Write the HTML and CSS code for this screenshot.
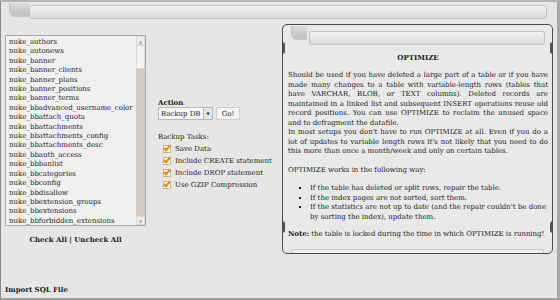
FILE: index.html
```html
<!DOCTYPE html>
<html>
  <head>
    <title>Database Administration</title>
    <link rel="stylesheet" href="styles.css">
  </head>
  <body>
    <div class="frame">
      <div class="topbar">
        <span class="tab-fold"></span>
        <div class="bar"></div>
      </div>

      <div class="main">
        <div class="left-col">
          <div class="listbox">
            <div class="options">
              <div>nuke_authors</div>
              <div>nuke_autonews</div>
              <div>nuke_banner</div>
              <div>nuke_banner_clients</div>
              <div>nuke_banner_plans</div>
              <div>nuke_banner_positions</div>
              <div>nuke_banner_terms</div>
              <div>nuke_bbadvanced_username_color</div>
              <div>nuke_bbattach_quota</div>
              <div>nuke_bbattachments</div>
              <div>nuke_bbattachments_config</div>
              <div>nuke_bbattachments_desc</div>
              <div>nuke_bbauth_access</div>
              <div>nuke_bbbanlist</div>
              <div>nuke_bbcategories</div>
              <div>nuke_bbconfig</div>
              <div>nuke_bbdisallow</div>
              <div>nuke_bbextension_groups</div>
              <div>nuke_bbextensions</div>
              <div>nuke_bbforbidden_extensions</div>
            </div>
            <div class="scrollbar">
              <span class="sb-btn">&#9650;</span>
              <span class="sb-thumb"></span>
              <span class="sb-track"></span>
              <span class="sb-btn">&#9660;</span>
            </div>
          </div>
          <div class="check-links"><b>Check All</b> | <b>Uncheck All</b></div>
        </div>

        <div class="mid-col">
          <div class="label-bold">Action</div>
          <div class="action-row">
            <span class="select">Backup DB<span class="select-arrow">&#9660;</span></span>
            <span class="go-button">Go!</span>
          </div>
          <div class="tasks-title">Backup Tasks:</div>
          <div class="task"><span class="checkbox"></span>Save Data</div>
          <div class="task"><span class="checkbox"></span>Include CREATE statement</div>
          <div class="task"><span class="checkbox"></span>Include DROP statement</div>
          <div class="task"><span class="checkbox"></span>Use GZIP Compression</div>
        </div>

        <div class="panel">
          <span class="side-tab left"></span>
          <span class="side-tab right"></span>
          <span class="side-tab left low"></span>
          <span class="side-tab right low"></span>
          <div class="panel-top">
            <span class="tab-fold small"></span>
            <div class="bar"></div>
          </div>
          <h3>OPTIMIZE</h3>
          <p class="justify">
            Should be used if you have deleted a large part of a table or if you have
            made many changes to a table with variable-length rows (tables that have
            VARCHAR, BLOB, or TEXT columns). Deleted records are maintained in a linked
            list and subsequent INSERT operations reuse old record positions. You can use
            OPTIMIZE to reclaim the unused space and to defragment the datafile.<br>
            In most setups you don't have to run OPTIMIZE at all. Even if you do a lot of
            updates to variable length rows it's not likely that you need to do this more
            than once a month/week and only on certain tables.
          </p>
          <p>OPTIMIZE works in the following way:</p>
          <ul>
            <li>If the table has deleted or split rows, repair the table.</li>
            <li>If the index pages are not sorted, sort them.</li>
            <li>If the statistics are not up to date (and the repair couldn't be done by sorting the index), update them.</li>
          </ul>
          <p class="note"><b>Note:</b> the table is locked during the time in which OPTIMIZE is running!</p>
          <div class="panel-bottom"></div>
        </div>
      </div>

      <div class="import-title">Import SQL File</div>
    </div>
  </body>
</html>
```

FILE: styles.css
```css
body {
  margin: 0;
  background-color: #e6e6e6;
  color: #222;
  font-family: "DejaVu Serif", serif;
  font-size: 7px;
}

.frame {
  position: relative;
  height: 296px;
  border-top: 2px solid #b4b4b4;
  border-left: 1px solid #8a8a8a;
  border-right: 3px solid #a8a8a8;
  border-bottom: 2px solid #a0a0a0;
  overflow: hidden;
}

.topbar {
  display: flex;
  align-items: flex-start;
  height: 24px;
  padding: 3px 10px 0 8px;
  box-sizing: border-box;
}

.tab-fold {
  width: 18px;
  height: 12px;
  margin-top: -2px;
  border-left: 2px solid #c8c8c8;
  border-bottom: 2px solid #c8c8c8;
  border-bottom-left-radius: 6px;
  background: linear-gradient(#dcdcdc, #c0c0c0);
}

.bar {
  flex: 1;
  height: 12px;
  border: 1px solid #c4c4c4;
  border-radius: 3px;
  background: linear-gradient(#f4f4f4, #dadada);
}

.main {
  display: flex;
  align-items: flex-start;
  padding: 9px 4px 0 4px;
}

/* table list */
.left-col {
  width: 141px;
}

.listbox {
  display: flex;
  height: 189px;
  border: 1px solid #a9a9a9;
  background-color: #f0f0f0;
}

.options {
  flex: 1;
  padding: 2px 0 0 3px;
  line-height: 9.4px;
  white-space: nowrap;
  overflow: hidden;
}

.scrollbar {
  display: flex;
  flex-direction: column;
  width: 9px;
  background-color: #d4ccc3;
}

.sb-btn {
  height: 9px;
  font-size: 4px;
  line-height: 9px;
  text-align: center;
  color: #999;
  background-color: #efefef;
  border: 1px solid #d8d8d8;
  box-sizing: border-box;
}

.sb-thumb {
  height: 24px;
  background: #f4f4f4;
  border: 1px solid #d8d8d8;
  box-sizing: border-box;
}

.sb-track {
  flex: 1;
}

.check-links {
  margin-top: 9px;
  text-align: center;
  font-weight: bold;
}

/* action column */
.mid-col {
  width: 124px;
  padding: 63px 0 0 12px;
  white-space: nowrap;
}

.label-bold {
  font-weight: bold;
  line-height: 9px;
}

.action-row {
  display: flex;
  gap: 3px;
  margin-bottom: 11px;
}

.select {
  display: flex;
  justify-content: space-between;
  align-items: center;
  width: 55px;
  height: 13px;
  padding-left: 2px;
  box-sizing: border-box;
  background-color: #f6f6f6;
  border: 1px solid #b8b8b8;
}

.select-arrow {
  width: 8px;
  height: 11px;
  font-size: 4px;
  line-height: 11px;
  text-align: center;
  background-color: #e4e4e4;
  border-left: 1px solid #b8b8b8;
}

.go-button {
  width: 24px;
  height: 13px;
  line-height: 13px;
  text-align: center;
  background-color: #f4f4f4;
  border: 1px solid #d0d0d0;
  box-sizing: border-box;
}

.tasks-title {
  line-height: 12px;
}

.task {
  display: flex;
  align-items: center;
  height: 12px;
  padding-left: 5px;
}

.checkbox {
  position: relative;
  width: 6px;
  height: 6px;
  margin-right: 4px;
  border: 1px solid #c8b890;
  background-color: #fbf6e8;
}

.checkbox::after {
  content: "";
  position: absolute;
  left: 1px;
  top: -2px;
  width: 2px;
  height: 5px;
  border-right: 2px solid #e08a10;
  border-bottom: 2px solid #e08a10;
  transform: rotate(40deg);
}

/* help panel */
.panel {
  position: relative;
  width: 271px;
  height: 230px;
  margin-top: -11px;
  border: 1px solid #4a4a4a;
  border-radius: 5px;
  box-sizing: border-box;
  padding: 0 4px 0 5px;
  background-color: #e9e9e9;
}

.side-tab {
  position: absolute;
  top: 17px;
  width: 3px;
  height: 12px;
  background-color: #505050;
}

.side-tab.left { left: -1px; border-radius: 0 3px 3px 0; }
.side-tab.right { right: -1px; border-radius: 3px 0 0 3px; }
.side-tab.low { top: 196px; }

.panel-top {
  display: flex;
  padding: 6px 3px 0 3px;
}

.tab-fold.small {
  width: 14px;
  margin-top: -5px;
  margin-right: 2px;
}

.panel h3 {
  margin: 8px 0 9px;
  font-size: 7px;
  text-align: center;
}

.panel p {
  margin: 0 0 9px;
  line-height: 9.5px;
}

.justify {
  text-align: justify;
}

.panel .note {
  white-space: nowrap;
  letter-spacing: -0.05px;
}

.panel ul {
  margin: 0 0 7px;
  padding-left: 22px;
  line-height: 9.5px;
  list-style: square;
}

.panel-bottom {
  position: absolute;
  left: 8px;
  right: 8px;
  bottom: 0;
  height: 3px;
  border: 1px solid #c4c4c4;
  border-bottom: none;
  border-radius: 3px 3px 0 0;
  background: #f0f0f0;
}

.import-title {
  position: absolute;
  left: 4px;
  top: 283px;
  font-weight: bold;
}
```
